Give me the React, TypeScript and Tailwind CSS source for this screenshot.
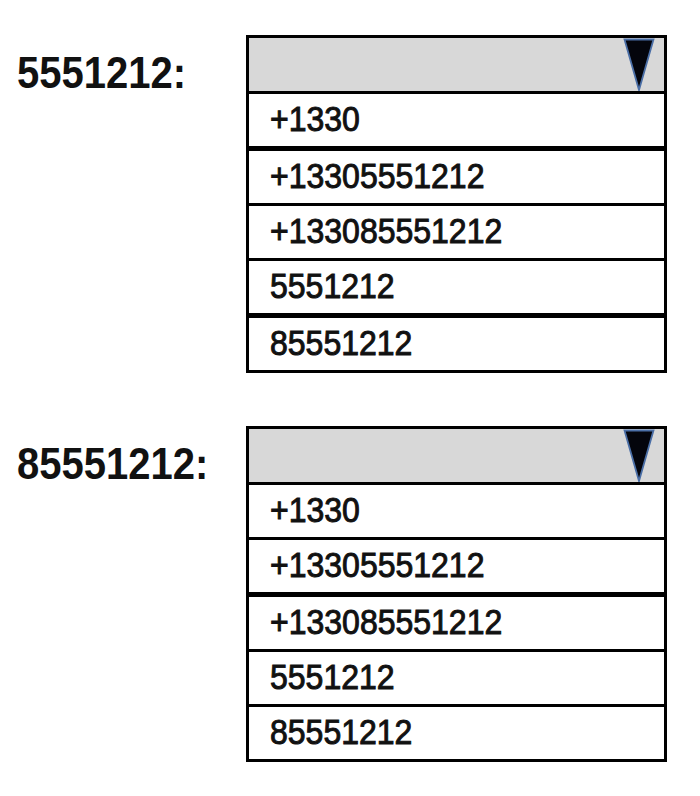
import React from "react";

type Row = { value: string; thick?: boolean };

const groups: { label: string; rows: Row[] }[] = [
  {
    label: "5551212:",
    rows: [
      { value: "+1330" },
      { value: "+13305551212", thick: true },
      { value: "+133085551212" },
      { value: "5551212" },
      { value: "85551212", thick: true },
    ],
  },
  {
    label: "85551212:",
    rows: [
      { value: "+1330" },
      { value: "+13305551212" },
      { value: "+133085551212", thick: true },
      { value: "5551212" },
      { value: "85551212" },
    ],
  },
];

function Arrow() {
  return (
    <svg width="32" height="53" viewBox="0 0 32 53" className="block">
      <polygon
        points="1.5,1.5 30.5,1.5 16,52"
        fill="#04050c"
        stroke="#4a6ea6"
        strokeWidth="1.8"
        strokeLinejoin="miter"
      />
    </svg>
  );
}

function Dropdown({ rows }: { rows: Row[] }) {
  return (
    <div className="flex w-[421px] flex-col border-[3px] border-black">
      <div className="flex h-[53px] items-start justify-end bg-[#d8d8d8] pr-[9px]">
        <Arrow />
      </div>
      {rows.map((row) => (
        <div
          key={row.value}
          className={
            row.thick
              ? "flex h-[57px] items-center border-t-[5px] border-black pb-[2px] pl-[21px]"
              : "flex h-[55px] items-center border-t-[3px] border-black pb-[2px] pl-[21px]"
          }
        >
          <span className="origin-center scale-y-110 text-[32px] leading-none font-normal text-[#111] [-webkit-text-stroke:0.9px_#111]">
            {row.value}
          </span>
        </div>
      ))}
    </div>
  );
}

export default function App() {
  return (
    <div
      className="min-h-[796px] w-[700px] bg-white pt-[35px]"
      style={{ fontFamily: '"Liberation Sans", Arial, sans-serif' }}
    >
      <div className="flex flex-col gap-[53px]">
        {groups.map((g) => (
          <div key={g.label} className="flex">
            <div className="w-[246px] pl-[17px] pt-[16px]">
              <span className="block origin-top scale-y-110 text-[40px] leading-none font-bold text-[#111]">
                {g.label}
              </span>
            </div>
            <Dropdown rows={g.rows} />
          </div>
        ))}
      </div>
    </div>
  );
}
